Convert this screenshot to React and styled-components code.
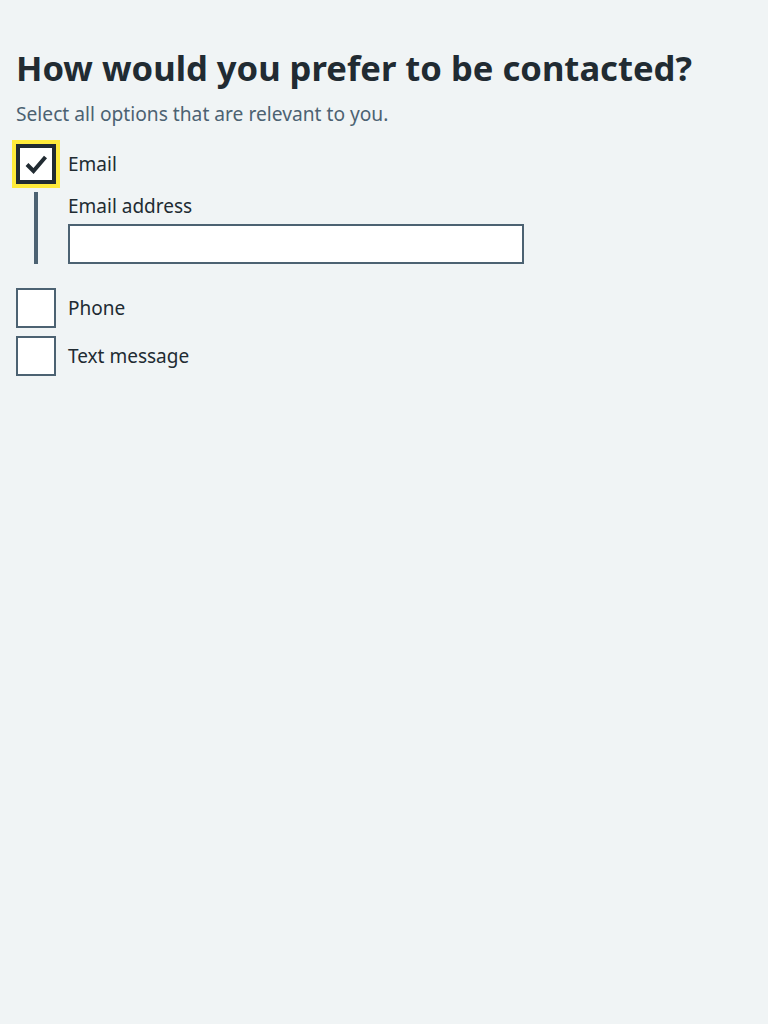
import React from "react";
import styled, { createGlobalStyle } from "styled-components";

const GlobalStyle = createGlobalStyle`
  body {
    margin: 0;
    background: #f0f4f5;
    font-family: "Noto Sans", "Open Sans", Arial, sans-serif;
    color: #212b32;
  }
`;

export default function App() {
  return (
    <Page>
      <GlobalStyle />
      <Fieldset>
        <Heading>How would you prefer to be contacted?</Heading>
        <Hint>Select all options that are relevant to you.</Hint>
        <Options>
          <Option>
            <Box checked focused>
              <svg width="24" height="24" viewBox="0 0 24 24">
                <polyline
                  points="3,12.5 9.5,19 21.5,5"
                  fill="none"
                  stroke="#212b32"
                  strokeWidth="4"
                />
              </svg>
            </Box>
            <OptionLabel>Email</OptionLabel>
          </Option>
          <Conditional>
            <FieldLabel htmlFor="email">Email address</FieldLabel>
            <TextInput id="email" type="email" />
          </Conditional>
          <Option>
            <Box />
            <OptionLabel>Phone</OptionLabel>
          </Option>
          <Option>
            <Box />
            <OptionLabel>Text message</OptionLabel>
          </Option>
        </Options>
      </Fieldset>
    </Page>
  );
}

const Page = styled.main`
  padding: 44px 16px 0;
  min-height: 1024px;
  box-sizing: border-box;
`;

const Fieldset = styled.div`
  display: flex;
  flex-direction: column;
`;

const Heading = styled.h1`
  margin: 0 0 8px;
  font-size: 34.6px;
  line-height: 48px;
  font-weight: 700;
  color: #212b32;
`;

const Hint = styled.p`
  margin: 0 0 16px;
  font-size: 19.2px;
  line-height: 28px;
  color: #4c6272;
`;

const Options = styled.div`
  display: flex;
  flex-direction: column;
  gap: 8px;
`;

const Option = styled.div`
  display: flex;
  align-items: center;
  gap: 12px;
  min-height: 40px;
`;

const Box = styled.span`
  width: 40px;
  height: 40px;
  box-sizing: border-box;
  background: #ffffff;
  border: ${(p) => (p.focused ? "4px solid #212b32" : "2px solid #4c6272")};
  box-shadow: ${(p) => (p.focused ? "0 0 0 4px #ffeb3b" : "none")};
  display: flex;
  align-items: center;
  justify-content: center;
  flex-shrink: 0;
`;

const OptionLabel = styled.span`
  font-size: 19px;
  line-height: 28px;
`;

const Conditional = styled.div`
  margin-left: 18px;
  border-left: 4px solid #4c6272;
  padding: 0 0 0 30px;
  margin-bottom: 16px;
  display: flex;
  flex-direction: column;
  gap: 4px;
`;

const FieldLabel = styled.label`
  font-size: 19px;
  line-height: 28px;
`;

const TextInput = styled.input`
  width: 456px;
  height: 40px;
  box-sizing: border-box;
  border: 2px solid #4c6272;
  background: #ffffff;
  font-size: 19px;
  padding: 4px;
  outline: none;
`;
